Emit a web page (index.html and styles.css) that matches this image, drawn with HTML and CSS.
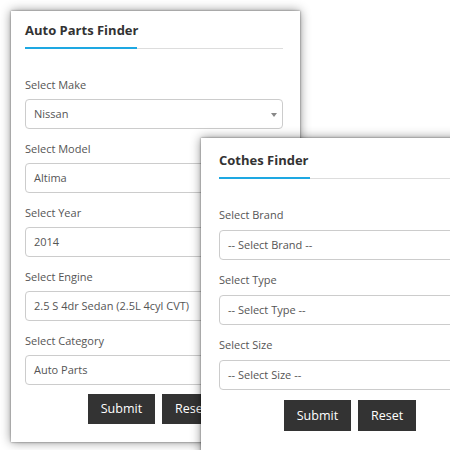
FILE: index.html
```html
<!DOCTYPE html>
<html lang="en">
<head>
<meta charset="utf-8">
<title>Finders</title>
<link rel="stylesheet" href="styles.css">
</head>
<body>
<div class="stage">
  <section class="card card-auto">
    <h2 class="card-title">Auto Parts Finder</h2>
    <div class="rule rule-auto"></div>
    <div class="fields">
      <div class="field">
        <label class="field-label">Select Make</label>
        <div class="select">Nissan<span class="caret"></span></div>
      </div>
      <div class="field">
        <label class="field-label">Select Model</label>
        <div class="select">Altima<span class="caret"></span></div>
      </div>
      <div class="field">
        <label class="field-label">Select Year</label>
        <div class="select">2014<span class="caret"></span></div>
      </div>
      <div class="field">
        <label class="field-label">Select Engine</label>
        <div class="select">2.5 S 4dr Sedan (2.5L 4cyl CVT)<span class="caret"></span></div>
      </div>
      <div class="field">
        <label class="field-label">Select Category</label>
        <div class="select">Auto Parts<span class="caret"></span></div>
      </div>
    </div>
    <div class="actions">
      <button class="btn">Submit</button>
      <button class="btn">Reset</button>
    </div>
  </section>

  <section class="card card-clothes">
    <h2 class="card-title">Cothes Finder</h2>
    <div class="rule rule-clothes"></div>
    <div class="fields fields-clothes">
      <div class="field">
        <label class="field-label">Select Brand</label>
        <div class="select">-- Select Brand --<span class="caret"></span></div>
      </div>
      <div class="field">
        <label class="field-label">Select Type</label>
        <div class="select">-- Select Type --<span class="caret"></span></div>
      </div>
      <div class="field">
        <label class="field-label">Select Size</label>
        <div class="select">-- Select Size --<span class="caret"></span></div>
      </div>
    </div>
    <div class="actions actions-clothes">
      <button class="btn">Submit</button>
      <button class="btn">Reset</button>
    </div>
  </section>
</div>
</body>
</html>
```

FILE: styles.css
```css
html, body {
  margin: 0;
  padding: 0;
  background: #ffffff;
  overflow: hidden;
  width: 450px;
  height: 450px;
}

body {
  font-family: "Open Sans", "Noto Sans", sans-serif;
  color: #555555;
}

.stage {
  position: relative;
  width: 450px;
  height: 450px;
  padding-top: 11px;
  box-sizing: border-box;
  overflow: hidden;
}

.card {
  background: #ffffff;
  box-sizing: border-box;
  box-shadow: 0 0 2px rgba(0, 0, 0, 0.5), 0 0 10px rgba(0, 0, 0, 0.45);
}

.card-auto {
  margin-left: 11px;
  width: 289px;
  height: 431px;
  padding: 9px 17px 0 14px;
}

.card-clothes {
  position: absolute;
  left: 201px;
  top: 138px;
  width: 300px;
  height: 330px;
  padding: 12px 20px 0 18px;
}

.card-title {
  margin: 0;
  font-size: 13px;
  line-height: 20px;
  font-weight: 700;
  color: #333333;
}

.rule {
  margin-top: 7px;
  height: 2px;
}

.rule-auto {
  background:
    linear-gradient(to right, #1ea8e2 0, #1ea8e2 112px, transparent 112px),
    linear-gradient(to bottom, transparent 1px, #dddddd 1px);
}

.rule-clothes {
  background:
    linear-gradient(to right, #1ea8e2 0, #1ea8e2 91px, transparent 91px),
    linear-gradient(to bottom, transparent 1px, #dddddd 1px);
}

.fields {
  margin-top: 28px;
  display: flex;
  flex-direction: column;
  gap: 12px;
}

.field {
  display: flex;
  flex-direction: column;
  gap: 6px;
}

.fields-clothes .field {
  gap: 7px;
}

.field-label {
  font-size: 11px;
  line-height: 16px;
  color: #555555;
}

.select {
  position: relative;
  height: 30px;
  box-sizing: border-box;
  border: 1px solid #cccccc;
  border-radius: 4px;
  padding: 0 20px 0 8px;
  font-size: 11px;
  line-height: 28px;
  color: #555555;
  white-space: nowrap;
  overflow: hidden;
}

.caret {
  position: absolute;
  right: 5px;
  top: 13px;
  width: 0;
  height: 0;
  border-left: 3.5px solid transparent;
  border-right: 3.5px solid transparent;
  border-top: 4px solid #888888;
}

.actions {
  margin-top: 9px;
  display: flex;
  justify-content: center;
  gap: 7px;
}

.actions-clothes {
  margin-top: 10px;
  width: 262px;
}

.btn {
  height: 30px;
  padding: 0 13px;
  border: none;
  border-radius: 0;
  background: #333333;
  color: #ffffff;
  font-family: "Open Sans", "Noto Sans", sans-serif;
  font-size: 12.5px;
  line-height: 30px;
}

.actions-clothes .btn {
  height: 31px;
}
```
